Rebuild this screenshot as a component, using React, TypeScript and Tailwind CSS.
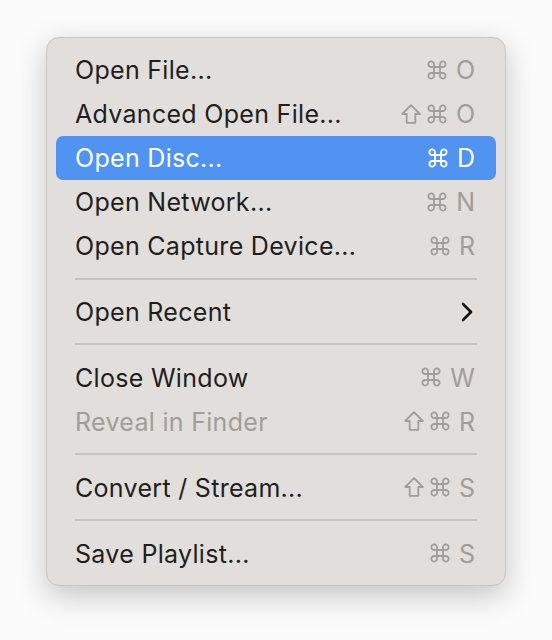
import React from "react";

type Item =
  | { kind: "item"; label: string; shortcut?: string[]; disabled?: boolean; active?: boolean; submenu?: boolean }
  | { kind: "sep" };

const items: Item[] = [
  { kind: "item", label: "Open File...", shortcut: ["⌘", "O"] },
  { kind: "item", label: "Advanced Open File...", shortcut: ["⇧", "⌘", "O"] },
  { kind: "item", label: "Open Disc...", shortcut: ["⌘", "D"], active: true },
  { kind: "item", label: "Open Network...", shortcut: ["⌘", "N"] },
  { kind: "item", label: "Open Capture Device...", shortcut: ["⌘", "R"] },
  { kind: "sep" },
  { kind: "item", label: "Open Recent", submenu: true },
  { kind: "sep" },
  { kind: "item", label: "Close Window", shortcut: ["⌘", "W"] },
  { kind: "item", label: "Reveal in Finder", shortcut: ["⇧", "⌘", "R"], disabled: true },
  { kind: "sep" },
  { kind: "item", label: "Convert / Stream...", shortcut: ["⇧", "⌘", "S"] },
  { kind: "sep" },
  { kind: "item", label: "Save Playlist...", shortcut: ["⌘", "S"] },
];

function Shift() {
  return (
    <svg width="20" height="20" viewBox="0 0 20 20" className="mr-[6px]">
      <path
        d="M10 1.2 L18.8 10 H14.3 V18.8 H5.7 V10 H1.2 Z"
        fill="none"
        stroke="currentColor"
        strokeWidth="1.8"
        strokeLinejoin="round"
      />
    </svg>
  );
}

function Cmd() {
  return (
    <svg width="20" height="20" viewBox="0 0 20 20" className="mr-[9px]">
      <path
        d="M7 7 H13 V13 H7 Z M7 7 V4.3 A2.8 2.8 0 1 0 4.3 7 H7 M13 7 V4.3 A2.8 2.8 0 1 1 15.7 7 H13 M7 13 V15.7 A2.8 2.8 0 1 1 4.3 13 H7 M13 13 V15.7 A2.8 2.8 0 1 0 15.7 13 H13"
        fill="none"
        stroke="currentColor"
        strokeWidth="1.8"
      />
    </svg>
  );
}

export default function App() {
  return (
    <div
      className="w-[552px] h-[640px] bg-[#fbfbfb] pt-[37px] pl-[46px]"
      style={{ fontFamily: "Inter, 'Noto Sans', sans-serif" }}
    >
      <div className="w-[460px] h-[549px] rounded-[13px] bg-[#e2dedb] border border-[#c9c5c2] shadow-[0_10px_30px_rgba(0,0,0,0.22)] px-[9px] pt-[10px] pb-[10px] flex flex-col">
        {items.map((it, i) => {
          if (it.kind === "sep") {
            return (
              <div key={i} className="h-[22px] flex items-center px-[19px]">
                <div className="h-[2px] w-full bg-[#c8c3c0]" />
              </div>
            );
          }
          const textColor = it.active
            ? "text-white"
            : it.disabled
            ? "text-[#a19d9a]"
            : "text-[#1e1e1e]";
          const scColor = it.active ? "text-white" : "text-[#a19d9a]";
          return (
            <div
              key={i}
              className={`h-[44px] flex items-center justify-between pl-[19px] pr-[21px] rounded-[7px] ${
                it.active ? "bg-[#5093f1]" : ""
              }`}
            >
              <span className={`text-[25px] leading-none pt-[2px] tracking-[0.3px] ${textColor}`}>{it.label}</span>
              {it.shortcut && (
                <span className={`flex items-center text-[25px] leading-none ${scColor}`}>
                  {it.shortcut.map((s, j) =>
                    s === "⇧" ? (
                      <Shift key={j} />
                    ) : s === "⌘" ? (
                      <Cmd key={j} />
                    ) : (
                      <span key={j} className="pt-[2px]">{s}</span>
                    )
                  )}
                </span>
              )}
              {it.submenu && (
                <svg width="12" height="20" viewBox="0 0 12 20" className="mr-[2px]">
                  <path d="M2 2 L10 10 L2 18" fill="none" stroke="#111" strokeWidth="2.6" strokeLinecap="round" strokeLinejoin="round" />
                </svg>
              )}
            </div>
          );
        })}
      </div>
    </div>
  );
}
